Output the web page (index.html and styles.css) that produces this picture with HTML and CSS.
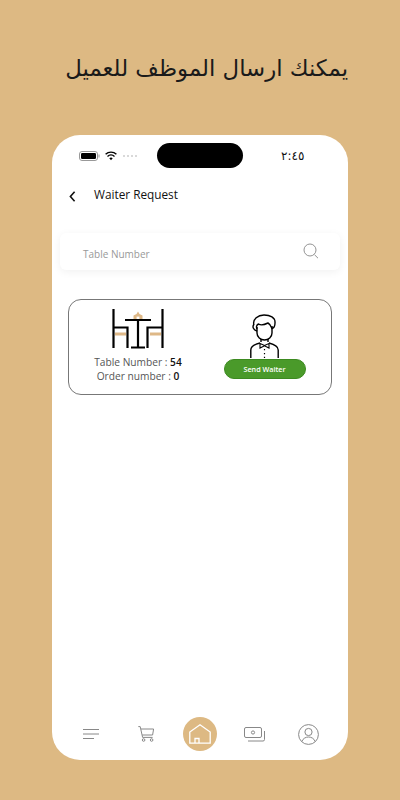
FILE: index.html
```html
<!DOCTYPE html>
<html lang="ar">
<head>
    <meta charset="UTF-8">
    <meta name="viewport" content="width=device-width, initial-scale=1.0">
    <title>Waiter Request</title>
    <link rel="stylesheet" href="styles.css">
</head>
<body>
    <h1 class="headline" dir="rtl">يمكنك ارسال الموظف للعميل</h1>

    <main class="phone">
        <div class="status-bar">
            <div class="status-left">
                <svg class="battery" width="21" height="10" viewBox="0 0 21 10">
                    <rect x="0.5" y="0.5" width="18" height="9" rx="2.5" fill="none" stroke="#999"/>
                    <rect x="2" y="2" width="15" height="6" rx="1.2" fill="#000"/>
                    <rect x="19.5" y="3.5" width="1" height="3" fill="#999"/>
                </svg>
                <svg class="wifi" width="12" height="10" viewBox="0 0 12 10">
                    <path d="M0.6 3.2C3.6 0.4 8.4 0.4 11.4 3.2M2.5 5.4C4.5 3.6 7.5 3.6 9.5 5.4" fill="none" stroke="#000" stroke-width="1.4"/>
                    <path d="M4.3 7.2C5.3 6.4 6.7 6.4 7.7 7.2L6 9.2Z" fill="#000"/>
                </svg>
                <div class="signal"><i></i><i></i><i></i><i></i></div>
            </div>
            <div class="island"></div>
            <div class="clock">٢:٤٥</div>
        </div>

        <header class="top-bar">
            <svg class="back-icon" width="7" height="11" viewBox="0 0 7 11">
                <path d="M5.6 0.8L1.4 5.5L5.6 10.2" fill="none" stroke="#111" stroke-width="1.6"/>
            </svg>
            <h2 class="page-title">Waiter Request</h2>
        </header>

        <div class="search-box">
            <span class="search-text">Table Number</span>
            <svg width="16" height="16" viewBox="0 0 16 16">
                <circle cx="7" cy="7" r="6" fill="none" stroke="#888" stroke-width="0.9"/>
                <path d="M11.4 11.6L15 15.2" stroke="#888" stroke-width="0.9"/>
            </svg>
        </div>

        <section class="request-card">
            <div class="table-col">
                <svg class="table-icon" width="52" height="40" viewBox="0 0 52 40">
                    <path d="M21.5 10V6.5L24.5 5L26 2.5L27.5 5L30.5 6.5V10Z" fill="#deb887"/>
                    <path d="M24.6 10V7.6H27.4V10Z" fill="#fff"/>
                    <rect x="3" y="23.5" width="11" height="3" fill="#deb887"/>
                    <rect x="38" y="23.5" width="11" height="3" fill="#deb887"/>
                    <g fill="none" stroke="#000" stroke-width="2.2">
                        <path d="M1.5 0V39M1.5 18.5H15.5V39"/>
                        <path d="M50.5 0V39M50.5 18.5H35.5V39"/>
                        <path d="M13 11H39M26 11V38M19 38.5H33"/>
                    </g>
                </svg>
                <p class="table-line">Table Number : <b>54</b></p>
                <p class="table-line">Order number : <b>0</b></p>
            </div>
            <div class="waiter-col">
                <svg class="waiter-icon" width="29" height="44" viewBox="0 0 29 44">
                    <g fill="none" stroke="#000" stroke-width="1.4">
                        <path d="M7 13V19C7 23 10.5 26 14.5 26C18.5 26 22 23 22 19V12"/>
                        <path d="M7 17C3.5 16 2 13 3.8 10.5C2.6 5 8 1 14 1C20 1 25.5 3.5 25 9C25 12 24 14 22 14.5C21 12 20 10 18 9C14 11 10 11 8.5 10C6.5 11 6 13 7 15"/>
                        <path d="M11 25V28M18 25V28"/>
                        <path d="M0.8 44V36C0.8 32.5 4 30.5 10 29M28.2 44V36C28.2 32.5 25 30.5 19 29"/>
                        <path d="M10 29.5L14.5 31.5L19 29.5V34L14.5 31.8L10 34Z" stroke-width="1.1"/>
                    </g>
                    <path d="M14.5 35V44" stroke="#000" stroke-width="1.2" stroke-dasharray="1.3 2.6"/>
                </svg>
                <button class="send-btn">Send Waiter</button>
            </div>
        </section>

        <nav class="bottom-nav">
            <div class="nav-item">
                <svg width="16" height="10" viewBox="0 0 16 10">
                    <path d="M0 0.5H16M0 5H16M0 9.5H11" stroke="#888" stroke-width="1"/>
                </svg>
            </div>
            <div class="nav-item">
                <svg width="16" height="16" viewBox="0 0 16 16">
                    <g fill="none" stroke="#888" stroke-width="1">
                        <path d="M0.3 0.6H2.2L4.6 11.4H14.6M3 3H15.6L14.6 9H4.2"/>
                        <circle cx="5.6" cy="14" r="1.3"/>
                        <circle cx="13.6" cy="14" r="1.3"/>
                    </g>
                </svg>
            </div>
            <div class="nav-item">
                <div class="home-btn">
                    <svg width="22" height="20" viewBox="0 0 22 20">
                        <path d="M0.8 19.2V8L11 0.8L21.2 8V19.2Z M6 19.2V14.5H10V19.2" fill="none" stroke="#fff" stroke-width="1.3"/>
                    </svg>
                </div>
            </div>
            <div class="nav-item">
                <svg width="21" height="15" viewBox="0 0 21 15">
                    <g fill="none" stroke="#888" stroke-width="1">
                        <rect x="0.5" y="0.5" width="17" height="10" rx="1.5"/>
                        <circle cx="9" cy="5.5" r="1.6"/>
                        <path d="M20.5 4V12.5Q20.5 14 19 14H4"/>
                    </g>
                </svg>
            </div>
            <div class="nav-item">
                <svg width="21" height="21" viewBox="0 0 21 21">
                    <g fill="none" stroke="#888" stroke-width="1">
                        <circle cx="10.5" cy="10.5" r="9.9"/>
                        <circle cx="10.5" cy="8" r="3.6"/>
                        <path d="M3.8 17.6C5 14.2 8 13 10.5 13C13 13 16 14.2 17.2 17.6"/>
                    </g>
                </svg>
            </div>
        </nav>
    </main>
</body>
</html>
```

FILE: styles.css
```css
* {
    box-sizing: border-box;
}
body {
    margin: 0;
    height: 800px;
    overflow: hidden;
    background: #ddb983;
    font-family: "Open Sans", Arial, sans-serif;
    display: flex;
    flex-direction: column;
    align-items: center;
}
.headline {
    margin: 52px 0 0;
    width: 296px;
    height: 83px;
    font-family: "DejaVu Sans", sans-serif;
    font-size: 22.8px;
    font-weight: 400;
    line-height: 32px;
    color: #1a1a1a;
    white-space: nowrap;
}
.phone {
    width: 296px;
    height: 625px;
    background: #fff;
    border-radius: 28px;
    display: flex;
    flex-direction: column;
    padding-top: 8px;
}
.status-bar {
    display: flex;
    align-items: center;
    height: 25px;
    padding-left: 27px;
}
.status-left {
    display: flex;
    align-items: center;
    gap: 5px;
    width: 78px;
}
.signal {
    display: flex;
    gap: 2px;
    margin-left: 1px;
}
.signal i {
    width: 2px;
    height: 2px;
    border-radius: 50%;
    background: #ccc;
}
.island {
    width: 86px;
    height: 25px;
    border-radius: 13px;
    background: #000;
}
.clock {
    margin-left: 38px;
    font-family: "DejaVu Sans", sans-serif;
    font-size: 12px;
    color: #111;
}
.top-bar {
    display: flex;
    align-items: center;
    gap: 17px;
    margin-top: 17px;
    padding-left: 17px;
    height: 20px;
}
.back-icon {
    margin-top: 2px;
}
.page-title {
    margin: 0 0 2px 1px;
    font-size: 11.8px;
    font-weight: 400;
    color: #111;
}
.search-box {
    margin: 28px 8px 0;
    height: 37px;
    padding: 0 21px 2px 23px;
    display: flex;
    align-items: center;
    justify-content: space-between;
    background: #fff;
    border-radius: 6px;
    box-shadow: 0 2px 8px rgba(0, 0, 0, 0.06);
}
.search-text {
    font-size: 10px;
    color: #999;
    padding-top: 7px;
}
.request-card {
    margin: 29px 16px 0;
    height: 96px;
    border: 1px solid #777;
    border-radius: 13px;
    display: flex;
}
.table-col {
    width: 138px;
    padding-top: 9px;
    display: flex;
    flex-direction: column;
    align-items: center;
}
.table-icon {
    margin-bottom: 6px;
}
.table-line {
    margin: 0;
    font-size: 10.2px;
    line-height: 14px;
    color: #555;
}
.table-line b {
    font-weight: 600;
    color: #111;
}
.waiter-col {
    flex: 1;
    padding: 14px 9px 0 0;
    display: flex;
    flex-direction: column;
    align-items: center;
}
.send-btn {
    width: 82px;
    height: 20px;
    margin-top: 1px;
    padding: 0;
    border: 1px solid #3c8a20;
    border-radius: 10px;
    background: #4a9a2a;
    color: #fff;
    font-family: inherit;
    font-size: 7.2px;
    font-weight: 600;
}
.bottom-nav {
    margin-top: auto;
    margin-bottom: 9px;
    height: 34px;
    padding: 0 12px;
    display: grid;
    grid-template-columns: repeat(5, 1fr);
}
.nav-item {
    display: flex;
    align-items: center;
    justify-content: center;
}
.home-btn {
    width: 34px;
    height: 34px;
    border-radius: 50%;
    background: #ddb983;
    display: flex;
    align-items: center;
    justify-content: center;
}
```
